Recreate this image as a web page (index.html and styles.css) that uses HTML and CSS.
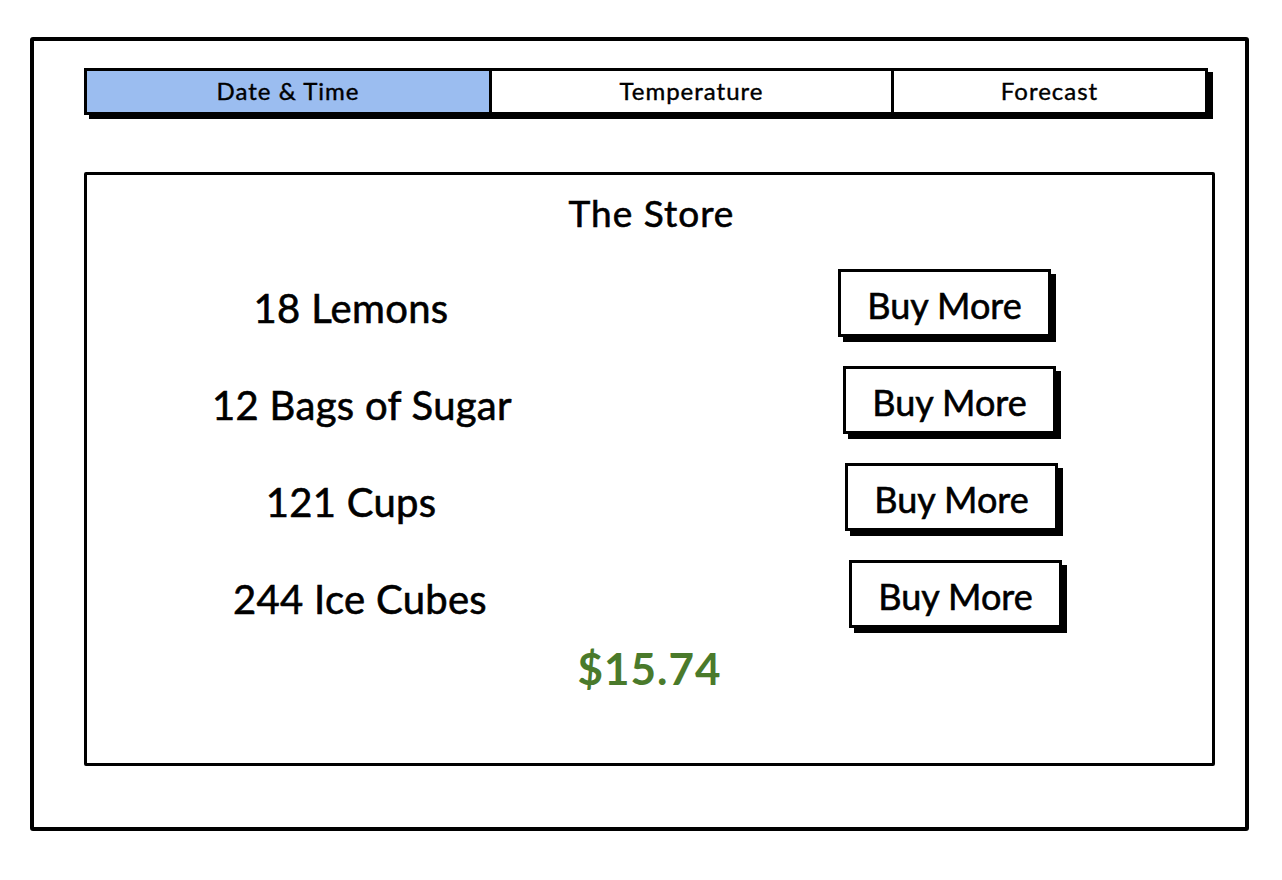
FILE: index.html
```html
<!DOCTYPE html>
<html lang="en">
<head>
<meta charset="utf-8">
<title>The Store</title>
<link rel="stylesheet" href="styles.css">
</head>
<body>
<div class="frame">
  <div class="tabs">
    <div class="tab tab-active">Date &amp; Time</div>
    <div class="tab tab-mid">Temperature</div>
    <div class="tab tab-last">Forecast</div>
  </div>
  <div class="panel">
    <h1 class="title">The Store</h1>
    <div class="rows">
      <div class="row">
        <div class="label">18 Lemons</div>
        <button class="buy buy-1">Buy More</button>
      </div>
      <div class="row">
        <div class="label label-2">12 Bags of Sugar</div>
        <button class="buy buy-2">Buy More</button>
      </div>
      <div class="row">
        <div class="label">121 Cups</div>
        <button class="buy buy-3">Buy More</button>
      </div>
      <div class="row">
        <div class="label label-4">244 Ice Cubes</div>
        <button class="buy buy-4">Buy More</button>
      </div>
    </div>
    <div class="price">$15.74</div>
  </div>
</div>
</body>
</html>
```

FILE: styles.css
```css
html, body {
  margin: 0;
  padding: 0;
  background: #ffffff;
}

body {
  font-family: Lato, "Open Sans", "DejaVu Sans", sans-serif;
  color: #000;
  padding: 37px 0 0 30px;
}

.frame {
  box-sizing: border-box;
  width: 1219px;
  height: 794px;
  border: 4px solid #000;
  border-radius: 3px;
  padding: 27px 0 0 50px;
}

.tabs {
  box-sizing: border-box;
  display: flex;
  width: 1124px;
  height: 47px;
  border: 3px solid #000;
  box-shadow: 5px 4px 0 #000;
}

.tab {
  display: flex;
  align-items: center;
  justify-content: center;
  font-size: 24px;
  letter-spacing: 1px;
  padding-bottom: 2px;
  box-sizing: border-box;
  -webkit-text-stroke: 0.4px #000;
}

.tab-active {
  width: 402px;
  background: #9bbdf0;
}

.tab-mid {
  width: 405px;
  border-left: 3px solid #000;
  border-right: 3px solid #000;
}

.tab-last {
  flex: 1;
}

.panel {
  box-sizing: border-box;
  width: 1131px;
  height: 594px;
  margin-top: 57px;
  border: 3px solid #000;
  border-radius: 2px;
  padding-top: 16px;
}

.title {
  margin: 0;
  text-align: center;
  font-size: 37px;
  font-weight: 400;
  line-height: 44px;
  letter-spacing: 1px;
  padding-left: 4px;
  -webkit-text-stroke: 0.6px #000;
}

.rows {
  display: flex;
  flex-direction: column;
  gap: 27px;
  margin-top: 34px;
}

.row {
  display: grid;
  grid-template-columns: 528px auto;
  align-items: center;
  height: 70px;
}

.label {
  text-align: center;
  font-size: 40px;
  line-height: 48px;
  padding-top: 8px;
  letter-spacing: 0.3px;
  -webkit-text-stroke: 0.6px #000;
}

.label-2 { padding-left: 22px; }
.label-4 { padding-left: 18px; }

.buy {
  box-sizing: border-box;
  width: 213px;
  height: 68px;
  border: 3px solid #000;
  background: #fff;
  box-shadow: 5px 5px 0 #000;
  font-family: Lato, "Open Sans", "DejaVu Sans", sans-serif;
  font-size: 36px;
  color: #000;
  padding: 3px 0 0 0;
  align-self: start;
  -webkit-text-stroke: 0.6px #000;
}

.buy-1 { margin-left: 223px; }
.buy-2 { margin-left: 228px; }
.buy-3 { margin-left: 230px; }
.buy-4 { margin-left: 234px; }

.price {
  text-align: center;
  font-size: 44px;
  font-weight: 700;
  line-height: 56px;
  color: #4a7a2b;
  margin-top: 10px;
  letter-spacing: 1px;
}
```
